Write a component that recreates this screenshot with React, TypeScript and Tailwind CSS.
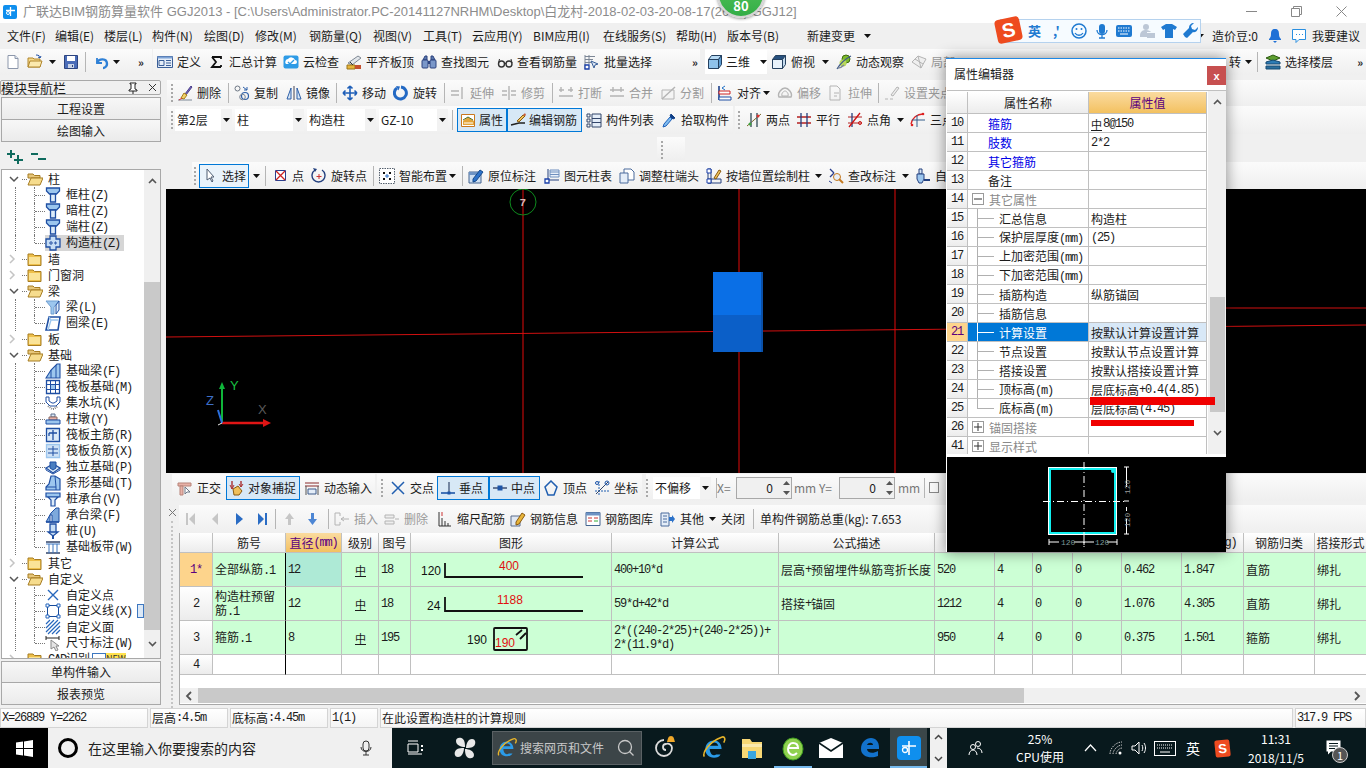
import React from "react";

type N = React.ReactNode;
const Svg = ({ w = 16, h = 16, v, children }: { w?: number; h?: number; v?: string; children: N }) => (
  <svg width={w} height={h} viewBox={v ?? `0 0 ${w} ${h}`} className="shrink-0 block" fill="none">{children}</svg>
);
const B = "#1f4fa3";
const L = "#9cc6ee";
const D = "#b4b4b4";

const I: Record<string, N> = {
  newDoc: <Svg><path d="M3 1.5h7l3 3v10H3z" fill="#fff" stroke="#8c97ab" /><path d="M10 1.5v3h3" fill="#dfe6f2" stroke="#8c97ab" /></Svg>,
  open: <Svg><path d="M1 4h5l1 1h6v8H1z" fill="#f6d98a" stroke="#b0862c" /><path d="M3 7h12l-2 6H1z" fill="#fbe9ad" stroke="#b0862c" /><path d="M9 1c3 0 4 1 4 3M13 4l-2-1M13 4l1-2" stroke={B} /></Svg>,
  save: <Svg><path d="M1.5 1.5h13v13h-13z" fill="#4a6cb8" stroke="#2c437f" /><path d="M4 2h8v5H4z" fill="#fff" /><path d="M5 10h6v4H5z" fill="#c7d2e6" /><path d="M9 11h1v2H9z" fill="#2c437f" /></Svg>,
  undo: <Svg><path d="M3 4v5h5" stroke="#2f80d6" strokeWidth="1.8" /><path d="M3 9c2-5 10-5 10 1 0 2-2 4-4 4" stroke="#2f80d6" strokeWidth="2.4" /></Svg>,
  define: <Svg><path d="M.5 2.5h15v11H.5z" fill="#e6eef8" stroke="#3a5f98" /><path d="M.5 2.5h15v2H.5z" fill="#7da3d6" /><path d="M2 6.5h5v5H2zM9 6.5h5M9 9h5M9 11.5h5" stroke="#3a5f98" /></Svg>,
  sigma: <Svg><path d="M3 3h9v2M12 13H3l4-5-4-5M12 11v2" stroke="#111" strokeWidth="1.8" /></Svg>,
  cloud: <Svg><rect x=".5" y="1.5" width="15" height="13" rx="2" fill="#2e9be6" /><path d="M3 10a3 3 0 0 1 2-5 4 4 0 0 1 7 1 2 2 0 0 1 0 4z" fill="#fff" /><path d="M5 8l2 2 4-4" stroke="#2e9be6" strokeWidth="1.4" /></Svg>,
  flush: <Svg><path d="M2 9l10-7 3 2L6 11z" fill="#e2e6ea" stroke="#7e8894" /><path d="M1 11h8v4H1z" fill="#e7b53a" stroke="#9a7418" /><path d="M9 11h6v4H9z" fill="#c4502e" /><path d="M4 8l3 3" stroke="#333" /></Svg>,
  binoc: <Svg><path d="M2 6l2-4h2v4zM10 6V2h2l2 4z" fill="#5a78ae" stroke="#2c437f" /><rect x="1" y="6" width="6" height="8" rx="1" fill="#7a97c9" stroke="#2c437f" /><rect x="9" y="6" width="6" height="8" rx="1" fill="#7a97c9" stroke="#2c437f" /><path d="M7 7h2v3H7z" fill="#2c437f" /></Svg>,
  glasses: <Svg><circle cx="4.5" cy="10" r="3" stroke="#333" strokeWidth="1.4" /><circle cx="12" cy="10" r="3" stroke="#333" strokeWidth="1.4" /><path d="M7.5 9.5h1.5M1.5 9l1-4M15 9l-1-4" stroke="#333" /></Svg>,
  batch: <Svg><path d="M1 2h10v1H1zM1 5h8v1H1zM1 8h6v1H1z" fill="#7d8796" /><path d="M1 1v14M5 1v9" stroke="#7d8796" /><path d="M7 7l7 3-3 1-1 3z" fill="#d9e4f2" stroke="#3a5f98" /><path d="M1 11h4v4H1z" fill="#fff" stroke="#1a3fa8" strokeWidth="1.3" /></Svg>,
  cube: <Svg><path d="M1.5 5.5h10v9h-10z" fill="#8fc2ea" stroke="#24405f" /><path d="M1.5 5.5l3-4h10l-3 4z" fill="#b7daf4" stroke="#24405f" /><path d="M11.5 5.5l3-4v9l-3 4z" fill="#5c9bd0" stroke="#24405f" /></Svg>,
  cubeTop: <Svg><path d="M1.5 5.5h10v9h-10z" fill="#e7f1fa" stroke="#24405f" /><path d="M1.5 5.5l3-4h10l-3 4z" fill="#27517f" stroke="#24405f" /><path d="M11.5 5.5l3-4v9l-3 4z" fill="#c5dbee" stroke="#24405f" /></Svg>,
  orbit: <Svg><circle cx="10" cy="5" r="4" fill="#7dbb2a" stroke="#3f6b0e" /><circle cx="7" cy="9" r="3.5" fill="#b9d95a" /><path d="M1 15c3-5 8-10 14-13" stroke="#3f5a8a" strokeWidth="1.2" /><path d="M2 14c2 0 4-1 6-3" stroke="#7d8796" strokeWidth="1.6" /></Svg>,
  local: <Svg><path d="M1 8l6-6 8 3-5 9z" fill="#efefef" stroke={D} /><path d="M4 5l8 5M7 2l3 12" stroke={D} /></Svg>,
  floor: <Svg><path d="M1 4l7-3 7 3-7 3z" fill="#5d9e2e" stroke="#2c5a12" /><path d="M1 8l7-2 7 2v2H1z" fill="#2c7bb5" stroke="#174a72" /><path d="M1 12h14v3H1z" fill="#2a6f9e" stroke="#174a72" /></Svg>,
  eraser: <Svg><path d="M8 9l6-8 1 1-6 8z" fill="#7a6bc2" stroke="#4b3f8a" /><path d="M4 13l3-5 3 2-3 4z" fill="#f2d16b" stroke="#a67f16" /><path d="M1 15h14" stroke="#7d8796" /><path d="M2 15l3-2" stroke="#d33" /></Svg>,
  copy: <Svg><rect x="1" y="1" width="5" height="5" rx="2.5" stroke="#6d7785" /><circle cx="11" cy="11" r="3.5" stroke="#2d5fa8" strokeWidth="1.2" /><circle cx="8.5" cy="12" r="2.8" stroke="#7d8796" /><path d="M9 2l4 3M13 5h-3M13 5V2" stroke="#2d5fa8" /></Svg>,
  mirror: <Svg><path d="M1 14l4-11v11zM15 14L11 3v11z" fill="#d7e6f5" stroke="#2d5fa8" /><path d="M8 1v14" stroke="#445" /></Svg>,
  move: <Svg><path d="M8 1v14M1 8h14M8 1L5.5 3.5M8 1l2.500 2.500M8 15l-2.500-2.500M8 15l2.500-2.500M1 8l2.500-2.500M1 8l2.500 2.500M15 8l-2.500-2.500M15 8l-2.500 2.500" stroke="#1f5fb8" strokeWidth="1.6" /></Svg>,
  rotate: <Svg><path d="M4 3a6 6 0 1 0 4-1" stroke="#2369c4" strokeWidth="3" /><path d="M3 1l4 .5-1.500 4z" fill="#2369c4" /></Svg>,
  extend: <Svg><path d="M1 6h8M1 10h8M12 2v12" stroke={D} strokeWidth="1.4" /></Svg>,
  trim: <Svg><path d="M1 6h5M10 6h5M1 10h5M10 10h5M8 1v14" stroke={D} strokeWidth="1.4" /></Svg>,
  cut: <Svg><path d="M1 5h5M10 5h5M1 11h14M3 2v5M13 2v5" stroke={D} strokeWidth="1.4" /></Svg>,
  merge: <Svg><path d="M1 5h14M1 11h14M4 2v5M12 2v5" stroke={D} strokeWidth="1.4" /></Svg>,
  split: <Svg><path d="M2 5h12v9H2z" fill="#f4f4f4" stroke={D} /><path d="M2 14L15 2" stroke={D} strokeWidth="1.4" /></Svg>,
  align: <Svg><path d="M2 1v14" stroke="#1c3f8a" strokeWidth="1.6" /><path d="M2 6h11v3H2z" fill="#fff" stroke="#c22" /><path d="M2 12h12v3H2z" fill="#fff" stroke={B} /><path d="M8 1L5 3l3 2" stroke="#1f6fc4" /></Svg>,
  offset: <Svg><path d="M2 12c-2-4 3-9 6-9s8 5 6 9z" stroke={D} strokeWidth="1.4" /><path d="M5 11c-1-3 2-5 3-5s4 2 3 5z" stroke={D} /></Svg>,
  stretch: <Svg><path d="M2 1h7l3 3v11H2z" stroke={D} /><path d="M6 8h5M6 11h3" stroke={D} /></Svg>,
  gripIc: <Svg><path d="M1 14h3M6 14h3" stroke={D} /><path d="M7 10l6-8 2 1-6 8z" fill="#ececec" stroke={D} /></Svg>,
  attr: <Svg><path d="M1.500 2.500h13v12h-13z" fill="#fff" stroke="#c9781f" /><path d="M3 9l5-4 6 4v4H3z" fill="#e3a53a" /><path d="M3 8l5-3 5 3" stroke="#4d6f2b" /><path d="M4 11h9" stroke="#fff" /></Svg>,
  rebar: <Svg><path d="M1 13l8-2h6" stroke="#222" strokeWidth="1.500" /><path d="M7 9l6-6 2 1-6 6z" fill="#f0c35a" stroke="#8a5a10" /><path d="M13 3l2-2 1 2-1 1z" fill="#c85a3a" /></Svg>,
  list: <Svg><path d="M1 2h3v3H1zM1 7h3v3H1zM1 12h3v3H1z" stroke="#33466b" /><path d="M6 2h9v13H6z" fill="#e4edf8" stroke="#33466b" /><path d="M6 6.500h9M6 10.500h9" stroke="#33466b" /></Svg>,
  pick: <Svg><path d="M10 2l4 4-2 1-3-3z" fill="#113f85" stroke="#113f85" /><path d="M9 5l2 2-6 7-3 1 1-3z" fill="#7fbdf0" stroke="#1f5fb8" /></Svg>,
  twoPt: <Svg><path d="M5 1v14M11 1v14M1 14L15 2" stroke="#7d6b2a" /><path d="M5 1v14M11 1v14" stroke="#335c8a" /><circle cx="4" cy="12" r="1.500" fill="#3fa23f" /><circle cx="12" cy="4" r="1.500" fill="#d33" /></Svg>,
  para: <Svg><path d="M1 5h14M1 11h14" stroke="#b52020" strokeWidth="1.300" /><path d="M5 1v14M11 1v14" stroke="#24407f" strokeWidth="1.300" /></Svg>,
  ang: <Svg><path d="M1 5h14M1 11h14" stroke="#b52020" /><path d="M5 1v14" stroke="#24407f" strokeWidth="1.300" /><path d="M2 15L13 1" stroke="#c11" strokeWidth="1.300" /><circle cx="13" cy="11" r="1.500" stroke="#c11" /></Svg>,
  threePt: <Svg><path d="M1 12C2 6 7 2 13 2" stroke="#d22" strokeWidth="1.300" /><path d="M7 3v12M2 8h13" stroke="#335c8a" /><circle cx="13" cy="2" r="1.300" fill="#d22" /><circle cx="2" cy="13" r="1.300" fill="#d22" /></Svg>,
  cursor: <Svg w={8} h={15}><path d="M1 1v11l3-2 2 4 1-1-2-4h3z" fill="#fff" stroke="#4f5d73" /></Svg>,
  pt: <Svg w={11} h={11}><path d="M.5.5h10v10H.5z" fill="#fff" stroke="#2a3f8f" /><path d="M1 1l9 9M10 1l-9 9" stroke="#c22" strokeWidth="1.300" /></Svg>,
  rotPt: <Svg><path d="M4 2a6.500 6.500 0 1 0 7 0" stroke="#24407f" strokeWidth="1.400" /><path d="M2 0l4 1-2 3z" fill="#24407f" /><path d="M8 6v5M5.500 8.500h5" stroke="#c33" /></Svg>,
  smart: <Svg><path d="M.5.500h15v15H.5z" fill="#fff" stroke="#55606e" strokeDasharray="1.500 1" /><path d="M4 4h2v2H4zM10 4h2v2h-2zM4 10h2v2H4zM10 10h2v2h-2z" fill="#111" /><path d="M8 6v4M6 8h4" stroke="#2d6fc4" /></Svg>,
  orig: <Svg><path d="M1 4h12v11H1z" fill="#cfe0f2" stroke="#43638f" /><path d="M1 4h12v3H1z" fill="#6d93c4" /><path d="M5 11l7-9 3 2-7 9-3 1z" fill="#2d72c9" stroke="#174a8a" /></Svg>,
  colT: <Svg><path d="M4 1v11h11" stroke="#24407f" /><path d="M6 2h9v7H6z" fill="#eaf1fa" stroke="#6f8fbe" /><path d="M6 4h9M6 6.500h9" stroke="#6f8fbe" /><path d="M1 11h4v4H1z" fill="#fff" stroke="#1a3fa8" strokeWidth="1.300" /></Svg>,
  adj: <Svg><path d="M5 1h7l3 3v8H5z" fill="#fff" stroke="#4b6a9c" /><path d="M1 5h8v10H1z" fill="#e4edf8" stroke="#4b6a9c" /></Svg>,
  wall: <Svg><path d="M2 1h3v14H2zM2 11h13v4H2z" stroke="#24407f" /><path d="M1 1h4v4H1zM1 11h4v4H1z" fill="#fff" stroke="#1a3fa8" /><path d="M8 10l5-8 2 1-5 8z" fill="#f0c35a" stroke="#8a5a10" /></Svg>,
  check: <Svg><path d="M2 1l4 4M2 9l4-4" stroke="#2a3f8f" strokeWidth="1.300" /><circle cx="9" cy="9" r="3.500" fill="#e8eef7" stroke="#c4791f" /><path d="M11 11l4 4" stroke="#c4791f" strokeWidth="2" /><path d="M1 13l3 2" stroke="#2a3f8f" /></Svg>,
  auto: <Svg><path d="M4 1h3v5H4z" fill="#d7e6f5" stroke="#24407f" /><path d="M2 6h7v5l-2 4H4l-2-4z" fill="#9cc6ee" stroke="#24407f" /><path d="M9 12h6" stroke="#24407f" strokeWidth="2" /></Svg>,
  ortho: <Svg><path d="M1 3h13v3H1z" fill="#e8b2a8" stroke="#b78378" /><path d="M3 6h3v9H3z" fill="#e8b2a8" stroke="#b78378" /><path d="M8 7v7l2-2 3 0z" fill="#fff" stroke="#6d7785" /></Svg>,
  snap: <Svg><path d="M3 1v8M12 1v6" stroke="#a33" strokeWidth="1.400" /><path d="M1 5l2 4 2-4M10 4l2 3 2-3" stroke="#a33" /><path d="M4 9l5-3 4 5-3 4H5z" fill="#f0c05a" stroke="#8a5a10" /></Svg>,
  dyn: <Svg><path d="M1 3h14M1 6h14" stroke="#8a2a2a" /><path d="M2 6v9M14 6v9" stroke="#555" /><path d="M4 9h8v5H4z" fill="#e4edf8" stroke="#3d5a8a" /></Svg>,
  cross: <Svg><path d="M2 2l12 12M14 2L2 14" stroke="#215fb0" strokeWidth="1.500" /></Svg>,
  perp: <Svg><path d="M1 13h14" stroke="#1d55a8" strokeWidth="1.600" /><path d="M9 2v11" stroke="#33466b" strokeWidth="1.200" /><rect x="7.500" y="11.500" width="3" height="3" fill="#1d55a8" /></Svg>,
  mid: <Svg><path d="M1 8h14" stroke="#33466b" strokeWidth="1.400" /><rect x="5.500" y="5.500" width="5" height="5" fill="#1d55a8" /></Svg>,
  vert: <Svg><path d="M8 1l6 6-3 8H5L2 7z" stroke="#215fb0" strokeWidth="1.500" /></Svg>,
  coord: <Svg><path d="M5 1v14M1 11h14" stroke="#215fb0" strokeDasharray="2 1" /><path d="M2 14L14 2" stroke="#33466b" /><circle cx="13" cy="3" r="2" stroke="#1d55a8" /><circle cx="3" cy="3" r="1.500" stroke="#1d55a8" /></Svg>,
  ins: <Svg><path d="M1 2h5M1 14h5M1 2v12M6 2v3M6 11v3" stroke={D} /><path d="M7 8h8M10 6l-3 2 3 2" stroke={D} /></Svg>,
  del: <Svg><path d="M1 4h9v3H1zM1 10h9v3H1z" fill="#eee" stroke={D} /><path d="M11 8h4" stroke={D} /></Svg>,
  scale: <Svg><path d="M2 1v14h12" stroke="#333" /><path d="M5 7v8M8 10v5M11 12v3" stroke="#333" /><path d="M4 2h2M4 4h2" stroke="#c33" /></Svg>,
  info: <Svg><path d="M1 5h9v10H1z" fill="#dfe7f2" stroke="#5a6d8c" /><path d="M6 11l6-9 3 2-6 9-3 1z" fill="#e8b53a" stroke="#8a5a10" /></Svg>,
  lib: <Svg><path d="M1 1.500h14v13H1z" fill="#fff" stroke="#43638f" /><path d="M1 1.500h14v3H1z" fill="#6d93c4" /><path d="M3 7h4M3 10h4M9 7h4" stroke="#c33" /><path d="M9 10h4" stroke="#3a3" /></Svg>,
  other: <Svg><path d="M1 2h8v13H1z" fill="#e4edf8" stroke="#4b6a9c" /><path d="M3 5h4M3 8h4M3 11h4" stroke="#4b6a9c" /><path d="M9 6h3V4l3 4-3 4v-2H9z" fill="#2d72c9" /></Svg>,
  pin: <Svg w={10} h={12}><path d="M2 1h6v1H7v5l2 1v1H1V8l2-1V2H2zM5 9v3" stroke="#222" fill="#fff" /></Svg>,
};

// Tree icons
const cT = <Svg><path d="M1.500 1h13v3l-3 3h-7l-3-3z" fill={L} stroke={B} strokeWidth="1.300" /><path d="M5.500 7h5v8h-5z" fill="#dcebf9" stroke={B} strokeWidth="1.300" /></Svg>;
const TI: Record<string, N> = {
  col: cT,
  gz: <Svg><path d="M5 1h6v3h4v8h-4v3H5v-3H1V4h4z" fill="#c7def5" stroke={B} strokeWidth="1.300" /><path d="M5 7h2v2H5zM10 7h1v2h-1z" fill="#fff" stroke={B} /></Svg>,
  beam: <Svg><path d="M1 2h13L9 8v7H6V8z" fill={L} stroke="#6f9ed0" /><path d="M14 2v9l-3 4V6z" fill="#dcebf9" stroke={B} /></Svg>,
  ring: <Svg><path d="M4 2h11l-2 13H1z" fill="#fff" stroke={B} strokeWidth="1.600" /><path d="M4 2l2 3h7M6 5l-3 10" stroke={L} strokeWidth="1.300" /></Svg>,
  fb: <Svg><path d="M1 15l5-8 6-6h3v14z" fill={L} stroke={B} strokeWidth="1.100" /><path d="M6 7v8M11 2v13" stroke={B} /></Svg>,
  raft: <Svg><path d="M1.500 1.500h13v13h-13z" fill="#fff" stroke={B} strokeWidth="1.300" /><path d="M1.500 5.500h13M1.500 10.500h13M5.500 1.500v13M10.500 1.500v13" stroke={B} /><path d="M6 6h4v4H6z" fill={L} /></Svg>,
  sump: <Svg><path d="M1 2h3v4l3 2h2l3-2V2h3v5l-4 4H5L1 7z" fill="#fff" stroke={B} /><path d="M3 11l4 3h2l4-3" stroke="#888" strokeDasharray="1 1" strokeWidth="2" /></Svg>,
  pier: <Svg><path d="M6 3h4v3H6z" fill="#dcebf9" stroke="#5a6d8c" /><path d="M4 6h8v3H4z" fill="#e8b2a8" stroke="#8a6a64" /><path d="M1 9h14v4H1z" fill={L} stroke={B} /></Svg>,
  rm: <Svg><path d="M1.500 1.500h13v13h-13z" fill="#dcebf9" stroke={B} strokeWidth="1.300" /><path d="M8 3v10M4 6h8M4 6v3" stroke={B} strokeWidth="1.300" /></Svg>,
  rn: <Svg><path d="M1.500 1.500h13v13h-13z" fill="#cfe2f5" stroke={L} strokeWidth="1.300" /><path d="M3 6h10M3 10h10M8 3v10" stroke={B} /></Svg>,
  iso: <Svg><path d="M1 9l7-4 7 4-7 5z" fill="#dcebf9" stroke={B} strokeWidth="1.300" /><path d="M5 3h6v6l-3 2-3-2z" fill="#4a7ec0" stroke={B} /><path d="M1 9v2l7 4 7-4V9" stroke={B} /></Svg>,
  strip: <Svg><path d="M1 15v-3l3-3 2-8h4l5 3v11z" fill={L} stroke={B} strokeWidth="1.200" /><path d="M1 12h10v3M10 1l1 11" stroke={B} /></Svg>,
  cap: <Svg><path d="M1 2h14v4H1z" fill={L} stroke={B} strokeWidth="1.200" /><path d="M3 6h10l-3 3v6H6V9z" fill="#dcebf9" stroke={B} strokeWidth="1.200" /></Svg>,
  capb: <Svg><path d="M1 15l5-9 5-5h3v14z" fill="#7ea9dc" stroke={B} /><path d="M5 8h2v7H5z" fill="#fff" stroke={B} /><path d="M1 15h13" stroke={B} strokeWidth="1.500" /></Svg>,
  pile: <Svg><path d="M5 1h6v8H5zM3 9h10l-5 4z" fill="#c7def5" stroke={B} strokeWidth="1.300" /><path d="M8 13v3" stroke={B} strokeWidth="2" /></Svg>,
  band: <Svg><path d="M1 3h14M1 14h14" stroke="#33466b" strokeWidth="1.300" /><path d="M1 5h14M4 5v9M8 5v9M12 5v9" stroke="#3d77c0" /></Svg>,
  cpt: <Svg><path d="M3 3l10 10M13 3L3 13" stroke="#2767bd" strokeWidth="1.400" /></Svg>,
  cline: <Svg><path d="M2.500 2.500h11v11h-11z" stroke="#184c9c" /><path d="M1 1h3v3H1zM12 1h3v3h-3zM1 12h3v3H1zM12 12h3v3h-3z" fill="#fff" stroke="#2767bd" /></Svg>,
  cface: <Svg><path d="M1 5l4-4M1 9l8-8M1 13L13 1M3 15L15 3M7 15l8-8M11 15l4-4" stroke="#2767bd" strokeWidth="1.200" /></Svg>,
  cdim: <Svg><path d="M1 3h13M1 1v4M14 1v4" stroke="#222" /><path d="M6 5v9l3-2 2 4 2-1-2-4h3z" fill="#e4e4e4" stroke="#888" /></Svg>,
};
const Fo = <Svg><path d="M1 3h5l1.500 1.500H14v10H1z" fill="#eec04b" stroke="#a67c22" /><path d="M2 6h11v7H2z" fill="#fae397" /></Svg>;
const FoOpen = <Svg><path d="M1 3h5l1.500 1.500H13V7H1z" fill="#e7c77a" stroke="#a67c22" /><path d="M4 7h12l-3 7H1z" fill="#f6dc8d" stroke="#a67c22" /></Svg>;

const mono = "font-['Liberation_Mono',monospace] text-[12px] tracking-[-1.2px]";
const T = ({ s }: { s: string }) => (
  <>{s.split(/([\x00-\x7f]+)/).map((p, i) => (i % 2 ? <span key={i} className={mono}>{p}</span> : p))}</>
);
const Rebar = () => <span className="text-[11px] mr-[1px] underline underline-offset-[1px] decoration-1">中</span>;

const Caret = ({ c = "w-[8px]" }: { c?: string }) => (
  <span className={`flex items-center justify-center shrink-0 ${c}`}><Svg w={7} h={4}><path d="M0 0h7L3.500 4z" fill="#111" /></Svg></span>
);
const Sep = ({ c = "mr-[5px]" }: { c?: string }) => <span className={`w-px h-[20px] bg-[#b5b5b5] shrink-0 ${c}`} />;
const Grip = ({ c = "w-[6px]" }: { c?: string }) => (
  <span className={`flex flex-col gap-[2px] shrink-0 ${c}`}>
    {[0, 1, 2, 3, 4].map((i) => <span key={i} className="w-[2px] h-[2px] bg-[#a8a8a8]" />)}
  </span>
);
const Tool = ({ i, t, c = "pr-[7px]", dim }: { i: string; t: string; c?: string; dim?: boolean }) => (
  <div className={`flex items-center gap-[4px] shrink-0 whitespace-nowrap ${c} ${dim ? "text-[#9a9a9a]" : ""}`}>
    <span className="w-[16px] flex justify-center shrink-0">{I[i]}</span><span>{t}</span>
  </div>
);
const Act = ({ i, t, c }: { i: string; t: string; c: string }) => (
  <div className={`h-[24px] border border-[#0078d7] bg-[#d7e8f6] flex items-center gap-[3px] pl-[2px] shrink-0 whitespace-nowrap ${c}`}>
    <span className="w-[16px] flex justify-center shrink-0">{I[i]}</span><span>{t}</span>
  </div>
);
const More = () => <span className="text-[11px] font-bold leading-none text-[#222] tracking-[-1px]">»</span>;
const Sel = ({ t, c = "w-[69px] mr-[3px]" }: { t: string; c?: string }) => (
  <div className={`h-[22px] flex shrink-0 bg-white ${c}`}>
    <span className="flex-1 pl-[2px] flex items-center whitespace-nowrap">{t}</span>
    <span className="w-[11px] bg-[#f2f2f2] flex items-center justify-center"><Svg w={7} h={4}><path d="M0 0h7L3.500 4z" fill="#111" /></Svg></span>
  </div>
);
const grad = "bg-gradient-to-b from-[#fbfbfb] to-[#efefef]";

const menus: [string, string][] = [
  ["文件(F)", "w-[48px]"], ["编辑(E)", "w-[49px]"], ["楼层(L)", "w-[48px]"], ["构件(N)", "w-[52px]"], ["绘图(D)", "w-[51px]"],
  ["修改(M)", "w-[54px]"], ["钢筋量(Q)", "w-[64px]"], ["视图(V)", "w-[50px]"], ["工具(T)", "w-[49px]"], ["云应用(Y)", "w-[61px]"],
  ["BIM应用(I)", "w-[70px]"], ["在线服务(S)", "w-[73px]"], ["帮助(H)", "w-[51px]"], ["版本号(B)", "w-[80px]"],
];

function TitleBar() {
  return (
    <div className="h-[23px] bg-white flex items-center shrink-0 relative">
      <div className="ml-[3px] w-[14px] h-[14px] rounded-[2px] bg-[#0f8fee] flex items-center justify-center shrink-0">
        <Svg w={11} h={11}><path d="M5.500 1v9M1 4.500h9" stroke="#fff" strokeWidth="1.300" /><circle cx="3" cy="7" r="1.500" stroke="#fff" /></Svg>
      </div>
      <span className="ml-[6px] text-[13px] leading-[20px] text-[#8c8c8c] whitespace-nowrap font-['Liberation_Sans','Noto_Sans_CJK_SC',sans-serif]">广联达BIM钢筋算量软件 GGJ2013 - [C:\Users\Administrator.PC-20141127NRHM\Desktop\白龙村-2018-02-03-20-08-17(2603).GGJ12]</span>
      <div className="ml-auto flex items-center pr-[19px] gap-[34px]">
        <Svg w={11} h={11}><path d="M0 5.500h11" stroke="#888" /></Svg>
        <Svg w={11} h={11}><path d="M.5 2.500h8v8h-8zM2.500 2.500v-2h8v8h-2" stroke="#888" /></Svg>
        <Svg w={11} h={11}><path d="M.5.500l10 10M10.500.500l-10 10" stroke="#888" /></Svg>
      </div>
    </div>
  );
}
function MenuBar() {
  return (
    <div className="h-[26px] flex items-center pl-[7px] shrink-0 whitespace-nowrap">
      {menus.map(([t, c]) => <span key={t} className={`shrink-0 ${c}`}>{t}</span>)}
      <span className="w-[56px] shrink-0">新建变更</span>
      <Caret />
      <div className="ml-auto flex items-center pr-[6px]">
        <Caret c="w-[10px] mr-[6px]" />
        <span className="w-[56px]">造价豆:0</span>
        <Svg w={14} h={16}><path d="M7 1c3 0 4 2 4 5 0 3 1 4 2 5v1H1v-1c1-1 2-2 2-5 0-3 1-5 4-5zM5 13h4l-2 2z" fill="#1f70d6" /></Svg>
        <span className="ml-[9px] mr-[5px]"><Svg><path d="M1.500 1.500h13v10H8l-3 3v-3H1.500z" fill="#fff" stroke="#2a8fe0" /><path d="M5 6.500h1M8 6.500h1M11 6.500h1" stroke="#2a8fe0" /></Svg></span>
        <span>我要建议</span>
      </div>
    </div>
  );
}
function Toolbar1() {
  return (
    <div className="h-[26px] flex shrink-0 items-center gap-[1px]">
      <div className={`${grad} h-full w-[152px] flex items-center pl-[5px] relative`}>
        <span className="w-[20px]">{I.newDoc}</span>
        <span className="w-[20px] ml-[2px]">{I.open}</span>
        <Caret c="w-[10px] mr-[6px]" />
        {I.save}
        <Sep c="ml-[6px] mr-[8px]" />
        {I.undo}
        <Caret c="w-[12px] mr-[16px]" />
        <More />
      </div>
      <div className={`${grad} h-full w-[547px] flex items-center pl-[4px]`}>
        <Tool i="define" t="定义" c="w-[52px]" />
        <Tool i="sigma" t="汇总计算" c="w-[74px]" />
        <Tool i="cloud" t="云检查" c="w-[63px]" />
        <Tool i="flush" t="平齐板顶" c="w-[75px]" />
        <Tool i="binoc" t="查找图元" c="w-[76px]" />
        <Tool i="glasses" t="查看钢筋量" c="w-[87px]" />
        <Tool i="batch" t="批量选择" c="w-[108px]" />
        <More />
      </div>
      <div className={`${grad} h-full flex-1 flex items-center ml-[4px] pr-[2px]`}>
        <div className="w-[62px] h-[24px] bg-white flex items-center pl-[2px] mr-[4px] shrink-0">
          <span className="w-[16px]">{I.cube}</span><span className="ml-[3px] w-[34px]">三维</span><Caret />
        </div>
        <Tool i="cubeTop" t="俯视" c="pr-[6px]" /><Caret c="w-[8px] mr-[7px]" />
        <Tool i="orbit" t="动态观察" c="w-[75px]" />
        <Tool i="local" t="局部" c="w-[318px]" dim />
        <span className="mr-[3px]">转</span><Caret c="w-[8px] mr-[5px]" />
        <Sep c="mr-[7px]" />
        <Tool i="floor" t="选择楼层" c="" />
        <span className="ml-auto mr-[2px]"><More /></span>
      </div>
    </div>
  );
}
function Row2() {
  return (
    <div className={`${grad} h-[26px] ml-px flex items-center pl-[4px] whitespace-nowrap`}>
      <Grip />
      <Tool i="eraser" t="删除" c="w-[51px]" /><Sep />
      <Tool i="copy" t="复制" c="w-[52px]" />
      <Tool i="mirror" t="镜像" c="w-[50px]" /><Sep />
      <Tool i="move" t="移动" c="w-[51px]" />
      <Tool i="rotate" t="旋转" c="w-[51px]" /><Sep />
      <Tool i="extend" t="延伸" c="w-[51px]" dim />
      <Tool i="trim" t="修剪" c="w-[51px]" dim /><Sep />
      <Tool i="cut" t="打断" c="w-[51px]" dim />
      <Tool i="merge" t="合并" c="w-[51px]" dim />
      <Tool i="split" t="分割" c="w-[51px]" dim /><Sep />
      <Tool i="align" t="对齐" c="w-[45px]" /><Caret c="w-[8px] mr-[7px]" />
      <Tool i="offset" t="偏移" c="w-[51px]" dim />
      <Tool i="stretch" t="拉伸" c="w-[50px]" dim /><Sep />
      <Tool i="gripIc" t="设置夹点" c="" dim />
    </div>
  );
}
function Row3() {
  return (
    <div className={`${grad} h-[28px] ml-px flex items-center pl-[4px] whitespace-nowrap`}>
      <Grip c="w-[4px]" />
      <Sel t="第2层" c="w-[57px] mr-[3px]" />
      <Sel t="柱" />
      <Sel t="构造柱" />
      <Sel t="GZ-10" />
      <Sep c="ml-px mr-[4px]" />
      <Act i="attr" t="属性" c="w-[50px]" />
      <Act i="rebar" t="编辑钢筋" c="w-[75px]" />
      <Tool i="list" t="构件列表" c="w-[75px] ml-[4px]" />
      <Tool i="pick" t="拾取构件" c="w-[72px]" />
      <span className="w-[2px] self-stretch bg-[#f0f0f0] shrink-0" />
      <span className="w-[11px] shrink-0 pl-[3px]"><Grip c="w-[2px]" /></span>
      <Tool i="twoPt" t="两点" c="w-[50px]" />
      <Tool i="para" t="平行" c="w-[51px]" />
      <Tool i="ang" t="点角" c="w-[48px]" />
      <Caret c="w-[10px] mr-[5px]" />
      <Tool i="threePt" t="三点" c="" />
    </div>
  );
}
function Row4() {
  return (
    <div className={`${grad} h-[27px] ml-[26px] flex items-center pl-[2px] whitespace-nowrap`}>
      <Grip c="w-[5px]" />
      <div className="h-[24px] w-[50px] border border-[#0078d7] bg-[#eaf3fb] flex items-center pl-[6px] shrink-0">{I.cursor}<span className="ml-[8px]">选择</span></div>
      <Caret c="w-[14px]" /><Sep c="ml-[2px] mr-[6px]" />
      <Tool i="pt" t="点" c="w-[39px]" />
      <Tool i="rotPt" t="旋转点" c="w-[62px]" /><Sep />
      <Tool i="smart" t="智能布置" c="w-[70px]" /><Caret c="w-[7px]" /><Sep c="ml-[6px] mr-[5px]" />
      <Tool i="orig" t="原位标注" c="w-[76px]" />
      <Tool i="colT" t="图元柱表" c="w-[75px]" />
      <Tool i="adj" t="调整柱端头" c="w-[87px]" />
      <Tool i="wall" t="按墙位置绘制柱" c="w-[108px]" /><Caret c="w-[8px] mr-[6px]" />
      <Tool i="check" t="查改标注" c="w-[73px]" /><Caret c="w-[8px] mr-[6px]" />
      <Tool i="auto" t="自动标注" c="" />
    </div>
  );
}
function Canvas() {
  return (
    <div className="h-[284px] bg-black overflow-hidden shrink-0">
      <svg width="1200" height="284" viewBox="0 0 1200 284" className="block" fill="none">
        <path d="M0 148L1200 136M780 119H1200" stroke="#d01010" strokeWidth="1" />
        <path d="M357 0V284M573 0V284M729 0V284" stroke="#e00a0a" strokeWidth="1" />
        <circle cx="357" cy="13" r="13" stroke="#0e8a1e" strokeWidth="1" />
        <text x="353.500" y="17" fill="#d9b9b9" fontSize="11" fontFamily="Liberation Mono" fontWeight="700">7</text>
        <path d="M547 83h48v43h-48z" fill="#0a6fe6" />
        <path d="M547 126h48v37h-48z" fill="#0b5fc8" />
        <path d="M595 83h2v80h-2z" fill="#0a50a8" />
        <path d="M56 234V196" stroke="#0fb53a" strokeWidth="2" /><path d="M56 193l-3 7h6z" fill="#0fb53a" />
        <path d="M56 234H100" stroke="#e01515" strokeWidth="2.500" /><path d="M105 234l-8-4v8z" fill="#e01515" />
        <path d="M56 234l-4-13" stroke="#2a6fe0" strokeWidth="2" />
        <path d="M56 234l-4 2" stroke="#e8e8e8" />
        <text x="64" y="201" fill="#18c040" fontSize="13" fontFamily="Liberation Sans">Y</text>
        <text x="40" y="216" fill="#3d6fc8" fontSize="13" fontFamily="Liberation Sans">Z</text>
        <text x="92" y="225" fill="#5a5a5a" fontSize="13" fontFamily="Liberation Sans">X</text>
      </svg>
    </div>
  );
}
function SnapBar() {
  const num = "w-[56px] h-[22px] border border-[#a8a8a8] bg-[#f0f0f0] flex items-center justify-end shrink-0";
  const spin = (
    <span className="w-[10px] ml-[8px] flex flex-col items-center gap-[6px]">
      <Svg w={7} h={4}><path d="M0 4h7L3.500 0z" fill="#555" /></Svg>
      <Svg w={7} h={4}><path d="M0 0h7L3.500 4z" fill="#555" /></Svg>
    </span>
  );
  return (
    <div className={`${grad} h-[27px] mt-px ml-[6px] mb-[4px] flex items-center pl-[5px] whitespace-nowrap shrink-0`}>
      <Tool i="ortho" t="正交" c="w-[49px]" />
      <Act i="snap" t="对象捕捉" c="w-[74px]" />
      <Tool i="dyn" t="动态输入" c="w-[71px] ml-[4px]" />
      <span className="w-[2px] self-stretch bg-[#f0f0f0] shrink-0" />
      <span className="w-[13px] pl-[4px] shrink-0"><Grip c="w-[2px]" /></span>
      <Tool i="cross" t="交点" c="w-[47px]" />
      <Act i="perp" t="垂点" c="w-[52px]" />
      <Act i="mid" t="中点" c="w-[51px]" />
      <Tool i="vert" t="顶点" c="w-[51px] ml-[3px]" />
      <Tool i="coord" t="坐标" c="w-[48px]" />
      <span className="w-[4px] self-stretch bg-[#f0f0f0] shrink-0" />
      <Grip c="w-[7px]" />
      <Sel t="不偏移" c="w-[58px]" />
      <Sep c="ml-[5px]" />
      <span className="w-[19px] text-[#777] shrink-0">X=</span>
      <div className={num}><span>0</span>{spin}</div>
      <span className="w-[27px] pl-[2px] text-[#777] shrink-0">mm</span>
      <span className="w-[20px] text-[#777] shrink-0">Y=</span>
      <div className={num}><span>0</span>{spin}</div>
      <span className="w-[29px] pl-[3px] text-[#777] shrink-0">mm</span>
      <Sep c="mr-[4px]" />
      <span className="w-[10px] h-[11px] border border-[#888] bg-[#f8f8f8] shrink-0" />
    </div>
  );
}
function RebarBar() {
  const nav = (d: string, fill: string, c: string) => (
    <span className={`shrink-0 ${c}`}><Svg w={11} h={14}><path d={d} fill={fill} /></Svg></span>
  );
  return (
    <div className={`${grad} h-[28px] flex items-center pl-[6px] whitespace-nowrap shrink-0`}>
      {nav("M1 1h2v12H1zM10 1v12L4 7z", "#c6c6c6", "w-[25px]")}
      {nav("M8 1v12L2 7z", "#c6c6c6", "w-[24px]")}
      {nav("M2 1v12l7-6z", "#2a6cc4", "w-[23px]")}
      {nav("M1 1v12l6-6zM8 1h2v12H8z", "#2a6cc4", "w-[18px]")}
      <Sep c="mr-[8px]" />
      {nav("M5.500 1L1 7h3v6h3V7h3z", "#c6c6c6", "w-[23px]")}
      {nav("M4 1v6H1l4.500 6L10 7H7V1z", "#4d86d4", "w-[21px]")}
      <Sep />
      <Tool i="ins" t="插入" c="w-[50px]" dim />
      <Tool i="del" t="删除" c="w-[53px]" dim />
      <Tool i="scale" t="缩尺配筋" c="w-[73px]" />
      <Tool i="info" t="钢筋信息" c="w-[75px]" />
      <Tool i="lib" t="钢筋图库" c="w-[75px]" />
      <Tool i="other" t="其他" c="w-[48px]" />
      <Caret c="w-[8px] mr-[5px]" />
      <span className="w-[32px] shrink-0">关闭</span>
      <Sep c="mr-[6px]" />
      <span>单构件钢筋总重(kg): 7.653</span>
    </div>
  );
}

const cols = "grid grid-cols-[33px_73px_56px_37px_32px_201px_167px_156px_60px_38px_40px_49px_60px_62px_71px_52px]";
const rowH = "border-r border-b border-[#c0c0c0]";
const Fig = ({ n }: { n: 1 | 2 | 3 }) => (
  <svg width="200" height="33" viewBox="0 0 200 33" className="block" fill="none">
    {n === 1 && <>
      <path d="M34 10v14h138" stroke="#111" strokeWidth="1.800" />
      <text x="10" y="22" fontSize="12" fill="#111" fontFamily="Liberation Sans">120</text>
      <text x="88" y="17" fontSize="12" fill="#e01010" fontFamily="Liberation Sans">400</text>
    </>}
    {n === 2 && <>
      <path d="M34 10v14h138" stroke="#111" strokeWidth="1.800" />
      <text x="16" y="23" fontSize="12" fill="#111" fontFamily="Liberation Sans">24</text>
      <text x="86" y="17" fontSize="12" fill="#e01010" fontFamily="Liberation Sans">1188</text>
    </>}
    {n === 3 && <>
      <rect x="83" y="7" width="33" height="22" rx="1" stroke="#111" strokeWidth="1.800" />
      <path d="M105 14l6-5M109 18l6-6" stroke="#111" strokeWidth="1.800" />
      <text x="56" y="23" fontSize="12" fill="#111" fontFamily="Liberation Sans">190</text>
      <text x="84" y="26" fontSize="12" fill="#e01010" fontFamily="Liberation Sans">190</text>
    </>}
  </svg>
);
const heads = ["", "筋号", "直径(mm)", "级别", "图号", "图形", "计算公式", "公式描述", "长度", "根数", "搭接", "损耗(%)", "单重(kg)", "总重(kg)", "钢筋归类", "搭接形式"];
const data: { id: string; no: N; dia: string; grade: boolean; fig?: 1 | 2 | 3; code: string; f: N; desc: string; rest: string[] }[] = [
  { id: "1*", no: <T s="全部纵筋.1" />, dia: "12", grade: true, fig: 1, code: "18", f: "400+10*d", desc: "层高+预留埋件纵筋弯折长度", rest: ["520", "4", "0", "0", "0.462", "1.847", "直筋", "绑扎"] },
  { id: "2", no: <T s="构造柱预留筋.1" />, dia: "12", grade: true, fig: 2, code: "18", f: "59*d+42*d", desc: "搭接+锚固", rest: ["1212", "4", "0", "0", "1.076", "4.305", "直筋", "绑扎"] },
  { id: "3", no: <T s="箍筋.1" />, dia: "8", grade: true, fig: 3, code: "195", f: <>2*((240-2*25)+(240-2*25))+<br />2*(11.9*d)</>, desc: "", rest: ["950", "4", "0", "0", "0.375", "1.501", "箍筋", "绑扎"] },
];
function RebarTable() {
  const hd = "h-[20px] bg-gradient-to-b from-[#ffffff] to-[#ececec] border-r border-b border-[#c0c0c0] flex items-center justify-center whitespace-nowrap overflow-hidden";
  const cell = `${rowH} flex items-center pl-[2px] overflow-hidden`;
  return (
    <div className="shrink-0">
      <div className={cols}>
        {heads.map((h, i) => (
          <div key={i} className={i === 2 ? "h-[20px] bg-gradient-to-b from-[#fadb9f] to-[#f3c15f] border-r border-b border-[#c0c0c0] flex items-center justify-center text-[#5a007f] whitespace-nowrap" : hd}><T s={h} /></div>
        ))}
      </div>
      {data.map((r, ri) => (
        <div key={r.id} className={`${cols} h-[34px]`}>
          <div className={`${rowH} flex items-center justify-center ${ri === 0 ? "bg-[#fdd48c] text-[#5a007f]" : "bg-gradient-to-b from-[#ffffff] to-[#ececec]"}`}><span className={mono}>{r.id}</span></div>
          <div className={`border-r border-r-black border-b border-b-[#c0c0c0] bg-[#ccffd5] flex items-center pl-[2px] leading-[14px]`}><span>{r.no}</span></div>
          <div className={`${cell} ${ri === 0 ? "bg-[#aeead6]" : "bg-[#ccffd5]"}`}><span className={mono}>{r.dia}</span></div>
          <div className={`${cell} bg-[#ccffd5] justify-center`}><Rebar /></div>
          <div className={`${cell} bg-[#ccffd5]`}><span className={mono}>{r.code}</span></div>
          <div className={`${rowH} bg-[#ccffd5] overflow-hidden`}><Fig n={r.fig!} /></div>
          <div className={`${cell} bg-[#ccffd5] leading-[14px]`}><span className={`${mono} whitespace-nowrap`}>{r.f}</span></div>
          <div className={`${cell} bg-[#ccffd5] whitespace-nowrap`}><T s={r.desc} /></div>
          {r.rest.map((v, i) => (
            <div key={i} className={`${cell} bg-[#ccffd5] whitespace-nowrap`}><T s={v} /></div>
          ))}
        </div>
      ))}
      <div className={`${cols} h-[20px]`}>
        <div className={`${rowH} flex items-center justify-center bg-gradient-to-b from-[#ffffff] to-[#ececec]`}><span className={mono}>4</span></div>
        <div className="border-r border-r-black border-b border-b-[#c0c0c0]" />
        {Array.from({ length: 14 }).map((_, i) => <div key={i} className={rowH} />)}
      </div>
    </div>
  );
}
function Bottom() {
  return (
    <div className="flex-1 flex min-h-0">
      <div className="w-[13px] shrink-0 flex flex-col items-center pt-[3px]">
        <Svg w={9} h={9}><path d="M1 1l7 7M8 1L1 8" stroke="#777" /></Svg>
        <div className="mt-[4px] flex-1 w-[3px] border-l-2 border-dotted border-[#c4c4c4]" />
      </div>
      <div className="flex-1 min-w-0 flex flex-col">
        <RebarBar />
        <div className="bg-white flex-1 flex flex-col border-b border-l border-[#a8a8a8] mb-[3px] overflow-hidden">
          <RebarTable />
          <div className="flex-1" />
          <div className="h-[15px] mb-[1px] flex bg-[#f0f0f0] shrink-0">
            <span className="w-[18px] flex items-center justify-center"><Svg w={8} h={10}><path d="M6 1L2 5l4 4" stroke="#555" strokeWidth="1.800" /></Svg></span>
            <span className="w-[826px] bg-[#c9c9c9]" />
            <span className="ml-auto w-[18px] flex items-center justify-center"><Svg w={8} h={10}><path d="M2 1l4 4-4 4" stroke="#555" strokeWidth="1.800" /></Svg></span>
          </div>
        </div>
      </div>
    </div>
  );
}

type Tr = [string, N, "c" | "f", string?, ("t" | "l")?];
const treeRows: Tr[] = [
  ["o", "柱", "f"], ["c", "框柱(Z)", "c", "col"], ["c", "暗柱(Z)", "c", "col"], ["c", "端柱(Z)", "c", "col"], ["c", "构造柱(Z)", "c", "gz", "l"],
  ["x", "墙", "f"], ["x", "门窗洞", "f"],
  ["o", "梁", "f"], ["c", "梁(L)", "c", "beam"], ["c", "圈梁(E)", "c", "ring", "l"],
  ["x", "板", "f"],
  ["o", "基础", "f"], ["c", "基础梁(F)", "c", "fb"], ["c", "筏板基础(M)", "c", "raft"], ["c", "集水坑(K)", "c", "sump"], ["c", "柱墩(Y)", "c", "pier"],
  ["c", "筏板主筋(R)", "c", "rm"], ["c", "筏板负筋(X)", "c", "rn"], ["c", "独立基础(P)", "c", "iso"], ["c", "条形基础(T)", "c", "strip"],
  ["c", "桩承台(V)", "c", "cap"], ["c", "承台梁(F)", "c", "capb"], ["c", "桩(U)", "c", "pile"], ["c", "基础板带(W)", "c", "band", "l"],
  ["x", "其它", "f"],
  ["o", "自定义", "f"], ["c", "自定义点", "c", "cpt"], ["c", "自定义线(X)", "c", "cline"], ["c", "自定义面", "c", "cface"], ["c", "尺寸标注(W)", "c", "cdim", "l"],
  ["x", "CAD识别", "f"],
];
function Nav() {
  return (
    <div className="w-[162px] shrink-0 flex flex-col pl-[1px] pr-[1px]">
      <div className="h-[5px]" />
      <div className="h-[15px] -ml-[1px] border border-[#a8a8a8] rounded-[2px] flex items-center text-[13px] leading-[13px] bg-[#f0f0f0]">
        <span>模块导航栏</span>
        <span className="ml-auto mr-[10px]">{I.pin}</span>
        <span className="mr-[3px]"><Svg w={9} h={9}><path d="M1 1l7 7M8 1L1 8" stroke="#333" /></Svg></span>
      </div>
      <div className="h-[23px] mt-[2px] border border-[#a8a8a8] bg-gradient-to-b from-[#f7f7f7] to-[#ebebeb] flex items-center justify-center">工程设置</div>
      <div className="h-[22px] border-x border-b border-[#a8a8a8] bg-gradient-to-b from-[#f7f7f7] to-[#ebebeb] flex items-center justify-center">绘图输入</div>
      <div className="h-[27px] flex items-center pl-[6px] gap-[7px] pt-[3px] shrink-0">
        <Svg><path d="M4 1v8M0 5h8M11 6v9M7 11h9" stroke="#0f6b5e" strokeWidth="2" /></Svg>
        <Svg><path d="M1 5h7M8 10h8" stroke="#0f6b5e" strokeWidth="2" /></Svg>
      </div>
      <div className="h-[490px] border border-[#a8a8a8] bg-white flex overflow-hidden relative">
        <div className="flex-1 min-w-0 overflow-hidden pt-[1px]">
          {treeRows.map(([k, t, kind, ic, last]) => kind === "f" ? (
            <div key={String(t)} className="h-[16px] flex items-center whitespace-nowrap">
              <span className="w-[20px] pl-[7px] shrink-0">
                {k === "o" ? <Svg w={10} h={7}><path d="M1 1l4 4 4-4" stroke="#555" strokeWidth="1.500" /></Svg> : <Svg w={7} h={10}><path d="M1 1l4 4-4 4" stroke="#c4c4c4" strokeWidth="1.500" /></Svg>}
              </span>
              <span className="w-[5px] border-t border-dotted border-[#777] shrink-0" />
              {k === "o" ? FoOpen : Fo}
              <span className="ml-[5px]"><T s={String(t)} /></span>
              {t === "CAD识别" && <span className="ml-[2px] w-[14px] h-[12px] border border-[#3d77c0]" />}
              {t === "CAD识别" && <span className="text-[9px] bg-[#ffe14d] text-[#333] leading-[12px]">NEW</span>}
            </div>
          ) : (
            <div key={String(t)} className="h-[16px] flex items-stretch whitespace-nowrap">
              <span className="ml-[13px] w-[19px] border-l border-dotted border-[#777] shrink-0" />
              <span className={`w-px border-l border-dotted border-[#777] shrink-0 ${last === "l" ? "h-[8px]" : ""}`} />
              <span className="w-[10px] self-center border-t border-dotted border-[#777] shrink-0" />
              <span className={`flex items-center pr-[4px] ${t === "构造柱(Z)" ? "bg-[#d6d6d6]" : ""}`}>
                {TI[ic!]}<span className="ml-[5px]"><T s={String(t)} /></span>
              </span>
              {t === "自定义线(X)" && <span className="ml-[1px] w-[8px] h-[14px] self-center border border-[#3d77c0] bg-[#dce9f7]" />}
            </div>
          ))}
        </div>
        <div className="w-[16px] shrink-0 bg-[#f0f0f0] flex flex-col items-center">
          <span className="h-[22px] flex items-center"><Svg w={9} h={6}><path d="M1 5l3.500-3.500L8 5" stroke="#555" strokeWidth="1.600" /></Svg></span>
          <span className="h-[90px]" />
          <span className="w-full h-[348px] bg-[#c9c9c9]" />
          <span className="flex-1 flex items-center"><Svg w={9} h={6}><path d="M1 1l3.500 3.500L8 1" stroke="#555" strokeWidth="1.600" /></Svg></span>
        </div>
      </div>
      <div className="h-[22px] mt-[2px] border border-[#a8a8a8] bg-gradient-to-b from-[#f7f7f7] to-[#ebebeb] flex items-center justify-center">单构件输入</div>
      <div className="h-[22px] border-x border-b border-[#a8a8a8] bg-gradient-to-b from-[#f7f7f7] to-[#ebebeb] flex items-center justify-center">报表预览</div>
    </div>
  );
}

type PR = { n: string; t: string; v?: N; k: "b" | "k" | "g+" | "g-" | "l"; sel?: boolean; last?: boolean };
const prows: PR[] = [
  { n: "10", t: "箍筋", k: "b", v: <><Rebar /><span className={mono}>8@150</span></> },
  { n: "11", t: "肢数", k: "b", v: <T s="2*2" /> },
  { n: "12", t: "其它箍筋", k: "b" },
  { n: "13", t: "备注", k: "k" },
  { n: "14", t: "其它属性", k: "g-" },
  { n: "15", t: "汇总信息", k: "l", v: "构造柱" },
  { n: "16", t: "保护层厚度(mm)", k: "l", v: <T s="(25)" /> },
  { n: "17", t: "上加密范围(mm)", k: "l" },
  { n: "18", t: "下加密范围(mm)", k: "l" },
  { n: "19", t: "插筋构造", k: "l", v: "纵筋锚固" },
  { n: "20", t: "插筋信息", k: "l" },
  { n: "21", t: "计算设置", k: "l", v: "按默认计算设置计算", sel: true },
  { n: "22", t: "节点设置", k: "l", v: "按默认节点设置计算" },
  { n: "23", t: "搭接设置", k: "l", v: "按默认搭接设置计算" },
  { n: "24", t: "顶标高(m)", k: "l", v: <T s="层底标高+0.4(4.85)" /> },
  { n: "25", t: "底标高(m)", k: "l", v: <T s="层底标高(4.45)" />, last: true },
  { n: "26", t: "锚固搭接", k: "g+" },
  { n: "41", t: "显示样式", k: "g+" },
];
function Popup() {
  const bx = (plus: boolean) => (
    <span className="ml-[4px] mr-[5px] w-[12px] h-[12px] border border-[#9a9a9a] flex items-center justify-center shrink-0">
      <Svg w={8} h={8}><path d={plus ? "M0 4h8M4 0v8" : "M0 4h8"} stroke="#333" /></Svg>
    </span>
  );
  return (
    <div className="absolute left-[946px] top-[58px] w-[280px] h-[494px] bg-white border-t border-t-[#1e88e5] shadow-[0_0_14px_rgba(0,0,0,0.45)] flex flex-col">
      <div className="h-[31px] flex shrink-0">
        <span className="ml-[8px] mt-[7px] leading-[16px]">属性编辑器</span>
        <span className="ml-auto mt-[7px] mr-0 w-[19px] h-[19px] bg-[#c75050] text-white flex items-center justify-center text-[11px] font-bold font-['Liberation_Sans',sans-serif]">x</span>
      </div>
      <div className="h-[364px] flex border-t border-[#c0c0c0] ml-px overflow-hidden shrink-0">
        <div className="w-[260px] shrink-0 overflow-hidden pt-px">
          <div className="flex h-[22px] border-b border-[#c0c0c0]">
            <span className="w-[21px] border-r border-[#c0c0c0] bg-gradient-to-b from-[#ffffff] to-[#ececec]" />
            <span className="w-[121px] border-r border-[#c0c0c0] bg-gradient-to-b from-[#ffffff] to-[#ececec] flex items-center justify-center">属性名称</span>
            <span className="w-[118px] border-r border-[#c0c0c0] bg-gradient-to-b from-[#fadb9f] to-[#f3c15f] text-[#5a007f] flex items-center justify-center">属性值</span>
          </div>
          {prows.map((r) => (
            <div key={r.n} className="flex h-[19px] border-b border-[#c0c0c0] overflow-hidden">
              <span className={`w-[21px] border-r border-[#c0c0c0] flex items-center justify-center ${r.sel ? "bg-[#fdd48c] text-[#5a007f]" : "bg-gradient-to-b from-[#ffffff] to-[#ececec]"}`}><span className={mono}>{r.n}</span></span>
              <span className={`w-[121px] border-r border-[#c0c0c0] flex items-center whitespace-nowrap ${r.sel ? "bg-[#0078d7] text-white" : ""}`}>
                {r.k === "b" && <span className="pl-[20px] mt-[2px] text-[#0000e6]">{r.t}</span>}
                {r.k === "k" && <span className="pl-[20px] mt-[2px]">{r.t}</span>}
                {(r.k === "g+" || r.k === "g-") && <>{bx(r.k === "g+")}<span className="mt-[2px] text-[#8a8a8a]"><T s={r.t} /></span></>}
                {r.k === "l" && <>
                  <span className={`ml-[9px] w-px shrink-0 ${r.sel ? "bg-white h-[19px]" : "bg-[#b0b0b0]"} ${r.last ? "h-[10px] self-start" : "h-[19px]"}`} />
                  <span className={`w-[16px] h-px shrink-0 ${r.sel ? "bg-white" : "bg-[#b0b0b0]"}`} />
                  <span className="ml-[5px] mt-[2px]"><T s={r.t} /></span>
                </>}
              </span>
              <span className={`w-[118px] border-r border-[#c0c0c0] pl-[2px] pt-[2px] flex items-center whitespace-nowrap overflow-hidden ${r.sel ? "bg-[#d8e8f7]" : ""}`}>{r.v}</span>
            </div>
          ))}
        </div>
        <div className="w-[18px] ml-px shrink-0 bg-[#f0f0f0] flex flex-col items-center">
          <span className="h-[22px] flex items-center"><Svg w={9} h={6}><path d="M1 5l3.500-3.500L8 5" stroke="#555" strokeWidth="1.600" /></Svg></span>
          <span className="h-[184px]" />
          <span className="w-[15px] h-[115px] bg-[#c9c9c9]" />
          <span className="flex-1 flex items-center"><Svg w={9} h={6}><path d="M1 1l3.500 3.500L8 1" stroke="#555" strokeWidth="1.600" /></Svg></span>
        </div>
      </div>
      <div className="h-[95px] mt-[3px] ml-px bg-black overflow-hidden shrink-0">
        <svg width="279" height="95" viewBox="0 0 279 95" className="block" fill="none">
          <rect x="101.500" y="10.500" width="68" height="67" stroke="#fff" />
          <rect x="103" y="12" width="65" height="64" stroke="#10f0f0" strokeWidth="2" />
          <circle cx="166" cy="14" r="2" fill="#10f0f0" />
          <path d="M137 5V90M96 44.500H180" stroke="#fff" strokeDasharray="7 3 1 3" />
          <path d="M177 10h5M177 77h5M179.500 10v20M179.500 50v4M179.500 62v15M177 44h5" stroke="#fff" />
          <path d="M102 82v6M137 82v6M170 82v6M102 85h10M127 85h20M160 85h10" stroke="#fff" />
          <text x="114" y="88" fontSize="8" fill="#7d9a9a" fontFamily="Liberation Mono">120</text>
          <text x="148" y="88" fontSize="8" fill="#7d9a9a" fontFamily="Liberation Mono">120</text>
          <text transform="translate(183 37) rotate(-90)" fontSize="8" fill="#9a9a9a" fontFamily="Liberation Mono">120</text>
          <text transform="translate(183 70) rotate(-90)" fontSize="8" fill="#9a9a9a" fontFamily="Liberation Mono">120</text>
        </svg>
      </div>
      <div className="absolute left-[144px] top-[338px] w-[125px] h-[8px] bg-[#f00000]" />
      <div className="absolute left-[145px] top-[361px] w-[103px] h-[6px] bg-[#f00000]" />
    </div>
  );
}
function Sogou() {
  const b = "#1f7ad1";
  return (
    <>
      <div className="absolute left-[1000px] top-[19px] w-[201px] h-[24px] bg-[#f6fbff] border border-[#b5d2ee] flex items-center pl-[27px] text-[#1f7ad1]">
        <span className="w-[21px] font-bold text-[13px] leading-[16px]">英</span>
        <span className="w-[22px] font-bold text-[13px] leading-[16px] pl-[4px]">,'</span>
        <span className="w-[23px]"><Svg><circle cx="8" cy="8" r="7" stroke={b} strokeWidth="1.500" /><circle cx="5.500" cy="6" r="1" fill={b} /><circle cx="10.500" cy="6" r="1" fill={b} /><path d="M4 10c2 3 6 3 8 0" stroke={b} strokeWidth="1.300" /></Svg></span>
        <span className="w-[22px]"><Svg><rect x="5" y="1" width="6" height="10" rx="3" fill={b} /><path d="M3 7c0 6 10 6 10 0M8 12v3M5 15h6" stroke={b} strokeWidth="1.300" /></Svg></span>
        <span className="w-[23px]"><Svg><rect x="0" y="2" width="16" height="12" rx="2" fill={b} /><path d="M2 5h12M2 8h12" stroke="#fff" strokeDasharray="1.500 1" /><path d="M4 11h8" stroke="#fff" /></Svg></span>
        <span className="w-[22px]"><Svg><circle cx="7" cy="4" r="3" fill="#bcc7d6" /><path d="M1 13c0-5 3-6 6-6s4 1 5 2H8v5H1z" fill="#bcc7d6" /><rect x="8" y="10" width="8" height="5" fill="#bcc7d6" /></Svg></span>
        <span className="w-[22px]"><Svg><path d="M5 1h6l5 3-2 3-2-1v9H4V6L2 7 0 4z" fill={b} /></Svg></span>
        <span><Svg><path d="M15 4l-3 3-3-1-1-3 3-3c-3 0-5 2-5 5l-6 6 2 3 2 1 6-6c3 1 5-2 5-5z" fill={b} /></Svg></span>
      </div>
      <div className="absolute left-[996px] top-[18px] w-[25px] h-[24px] rounded-[4px] bg-[#ee4b1f] -rotate-12 flex items-center justify-center text-white font-black text-[20px] leading-[20px] font-['Liberation_Sans',sans-serif]">S</div>
    </>
  );
}
function Status() {
  const c = "h-[20px] border border-[#d4d4d4] bg-gradient-to-b from-[#ffffff] to-[#f4f4f4] flex items-center pl-[1px] shrink-0 whitespace-nowrap";
  return (
    <div className="h-[20px] flex shrink-0">
      <div className={`${c} w-[148px]`}><span className={mono}>X=26889 Y=2262</span></div>
      <div className={`${c} w-[78px] ml-[2px]`}><T s="层高:4.5m" /></div>
      <div className={`${c} w-[98px] ml-[2px]`}><T s="底标高:4.45m" /></div>
      <div className={`${c} w-[48px] ml-[2px]`}><T s="1(1)" /></div>
      <div className={`${c} w-[913px] ml-[2px]`}>在此设置构造柱的计算规则</div>
      <div className={`${c} flex-1 ml-[2px]`}><span className={mono}>317.9 FPS</span></div>
    </div>
  );
}
function Taskbar() {
  const app = "w-[38px] h-[40px] flex items-center justify-center shrink-0";
  const ieE = (s: number) => (
    <Svg w={s} h={s} v="0 0 24 24">
      <path d="M5 13h14c0-5-3-8-7-8s-8 3-8 8 3 8 8 8c3 0 5-1 6-3h-4c-1 1-3 1-4 0-1-1-2-3-2-5zM8 10c1-2 2-3 4-3s3 1 4 3z" fill="#2b9be8" fillRule="evenodd" />
      <path d="M3 20C1 16 8 6 19 2c3-1 4 2 2 5" stroke="#e8b52a" strokeWidth="1.500" />
    </Svg>
  );
  return (
    <div className="h-[40px] bg-[#08191d] flex text-white shrink-0">
      <div className="w-[48px] bg-black flex items-center justify-center shrink-0">
        <Svg w={17} h={17}><path d="M0 2.500l7-1v6.500H0zM8 1.400L17 0v8H8zM0 9h7v6.500l-7-1zM8 9h9v8l-9-1.400z" fill="#fff" /></Svg>
      </div>
      <div className="w-[344px] bg-[#f0f0f0] flex items-center text-[#222] shrink-0">
        <span className="ml-[10px] w-[20px] h-[20px] rounded-full border-[3px] border-black shrink-0 mr-[10px]" />
        <span className="text-[14px] leading-[20px] w-[270px]">在这里输入你要搜索的内容</span>
        <Svg><rect x="5" y="1" width="6" height="10" rx="3" stroke="#333" /><path d="M3 7c0 6 10 6 10 0M8 12v3M5 15h6" stroke="#333" /></Svg>
      </div>
      <div className="w-[46px] flex items-center justify-center shrink-0">
        <Svg><path d="M1 1h10M1 14h14M1 4h10v8H1z" stroke="#fff" /><path d="M14 5h2v2h-2zM14 9h2v2h-2z" fill="#fff" /></Svg>
      </div>
      <div className="w-[54px] flex items-center justify-center shrink-0">
        <Svg w={24} h={24}><path d="M12 11C8 11 3 9 3 5s5-4 7-2 2 6 2 8zM13 12c0-4 2-9 6-9s4 5 2 7-6 2-8 2zM12 13c4 0 9 2 9 6s-5 4-7 2-2-6-2-8zM11 12c0 4-2 9-6 9s-4-5-2-7 6-2 8-2z" fill="#e8e8e8" /></Svg>
      </div>
      <div className="w-[150px] h-[40px] flex shrink-0 items-center">
        <div className="w-[150px] h-[34px] bg-[#3c4548] border border-[#5a6164] flex items-center text-[#c8c8c8] pl-[3px]">
          {ieE(22)}<span className="ml-[2px] w-[97px] leading-[16px]">搜索网页和文件</span>
          <Svg w={18} h={18}><circle cx="8" cy="8" r="6.500" stroke="#c8c8c8" strokeWidth="1.300" /><path d="M12.500 12.500l4 4" stroke="#c8c8c8" strokeWidth="1.300" /></Svg>
        </div>
      </div>
      <div className="w-[42px] ml-[2px] mr-[9px] flex items-center justify-center shrink-0">
        <Svg w={26} h={26}><path d="M12 5a8 8 0 1 0 8 8c0-3-3-5-6-4a3 3 0 0 0 0 6" stroke="#ddd" strokeWidth="1.800" /><path d="M19 1c3 0 3 3 4 6h-8c1-3 1-6 4-6z" fill="#f0a82a" /></Svg>
      </div>
      <div className={app}>{ieE(26)}</div>
      <div className={app}><Svg w={22} h={24}><path d="M1 3h8l2 3h10v16H1z" fill="#f7d774" /><path d="M1 8h20v3H1z" fill="#fbe9ad" /><path d="M7 15h8v8H7z" fill="#3aa6e0" /></Svg></div>
      <div className={`${app} ml-[3px] relative`}>
        <Svg w={24} h={26}><ellipse cx="12" cy="14" rx="10" ry="11" fill="#8fd14f" stroke="#3f9c1f" /><path d="M7 13h10c0-3-2-5-5-5s-5 3-5 6 2 6 5 6c2 0 3-1 4-2" stroke="#fff" strokeWidth="2" /></Svg>
        <span className="absolute bottom-0 left-0 right-0 h-[2px] bg-[#76b9ed]" />
      </div>
      <div className={app}><Svg w={24} h={20}><path d="M0 5l12-5 12 5v15H0z" fill="#fff" /><path d="M0 5l12 8 12-8" stroke="#08191d" strokeWidth="1.600" /></Svg></div>
      <div className={`${app} ml-px`}><Svg w={22} h={24}><path d="M2 13c0-7 5-11 10-11s8 4 8 9v2H8c0 4 6 5 11 2v5c-7 3-17 1-17-7zm6-4h6c0-3-5-3-6 0z" fill="#1272cc" fillRule="evenodd" /></Svg></div>
      <div className="w-[37px] ml-px h-[40px] bg-[#3a4649] flex items-center justify-center shrink-0 relative">
        <span className="w-[24px] h-[24px] rounded-[4px] bg-[#0f8fee] flex items-center justify-center"><Svg w={18} h={18}><path d="M9 2v14M2 7h14" stroke="#fff" strokeWidth="1.600" /><circle cx="5" cy="11" r="2.500" stroke="#fff" strokeWidth="1.300" /></Svg></span>
        <span className="absolute bottom-0 left-0 right-0 h-[2px] bg-[#76b9ed]" />
      </div>
      <div className="w-[17px] ml-[3px] bg-[#f0f0f0] flex flex-col items-center justify-center gap-[16px] shrink-0">
        <Svg w={9} h={6}><path d="M1 5l3.500-3.500L8 5" stroke="#444" strokeWidth="1.500" /></Svg>
        <Svg w={9} h={6}><path d="M1 1l3.500 3.500L8 1" stroke="#444" strokeWidth="1.500" /></Svg>
      </div>
      <div className="w-[58px] flex items-center justify-center shrink-0"><Svg><circle cx="10" cy="4" r="2.500" stroke="#fff" /><circle cx="5" cy="7" r="2.500" stroke="#fff" /><path d="M1 15c0-3 2-5 4-5s4 2 4 5M9 8c3 0 5 2 5 5" stroke="#fff" /></Svg></div>
      <div className="w-[70px] flex flex-col items-center justify-center leading-[18px] shrink-0"><span>25%</span><span>CPU使用</span></div>
      <div className="w-[30px] flex items-center justify-center shrink-0"><Svg w={13} h={8}><path d="M1 7l5.500-6L12 7" stroke="#fff" strokeWidth="1.200" /></Svg></div>
      <div className="w-[22px] flex items-center justify-center shrink-0"><Svg><path d="M2 14C2 8 8 2 14 2M5 14c0-4 5-9 9-9M8 14c0-2 3-6 6-6" stroke="#c8c8c8" strokeDasharray="1.500 1" /><circle cx="12" cy="13" r="1.500" fill="#fff" /></Svg></div>
      <div className="w-[23px] flex items-center justify-center shrink-0"><Svg><path d="M1 6h3l4-4v12l-4-4H1z" stroke="#fff" /><path d="M11 5c1 2 1 4 0 6M13 3c2 3 2 7 0 10" stroke="#fff" /></Svg></div>
      <div className="w-[30px] flex items-center justify-center shrink-0"><Svg w={22} h={15}><rect x=".5" y=".5" width="21" height="14" stroke="#fff" /><path d="M3 4h16M3 7h16" stroke="#fff" strokeDasharray="1 1" /><path d="M6 11h10" stroke="#fff" /></Svg></div>
      <div className="w-[26px] flex items-center justify-center text-[14px] leading-[18px] shrink-0">英</div>
      <div className="w-[32px] flex items-center justify-center shrink-0"><span className="w-[15px] h-[17px] rounded-[2px] -rotate-6 bg-[#ee4b1f] flex items-center justify-center font-black text-[13px] leading-[14px] font-['Liberation_Sans',sans-serif]">S</span></div>
      <div className="w-[76px] flex flex-col items-center justify-center leading-[19px] shrink-0"><span>11:31</span><span>2018/11/5</span></div>
      <div className="w-[38px] flex items-center justify-center shrink-0 relative">
        <Svg w={15} h={16}><path d="M.5.500h14v11H5l-3 3v-3H.5z" fill="#fff" /><path d="M3 3.500h9M3 6h9M3 8.500h6" stroke="#08191d" /></Svg>
        <span className="absolute left-[18px] top-[19px] w-[16px] h-[16px] rounded-full bg-[#555] border border-[#ccc] flex items-center justify-center text-[11px] leading-[12px]">1</span>
      </div>
    </div>
  );
}

export default function App() {
  return (
    <div className="relative w-[1366px] h-[768px] overflow-hidden bg-[#f0f0f0] flex flex-col text-[12px] leading-[16px] text-[#1c1c1c] font-['Noto_Sans_CJK_SC',sans-serif]">
      <TitleBar />
      <MenuBar />
      <Toolbar1 />
      <div className="h-[633px] flex shrink-0 min-h-0">
        <Nav />
        <div className="flex-1 min-w-0 flex flex-col pl-[4px]">
          <div className="h-[5px] shrink-0" />
          <Row2 />
          <Row3 />
          <div className="h-[28px] shrink-0 pl-[491px] pt-[3px]">
            <div className={`${grad} w-[28px] h-[23px] pl-[4px] pt-[4px]`}><Grip c="w-[2px]" /></div>
          </div>
          <Row4 />
          <Canvas />
          <SnapBar />
          <Bottom />
        </div>
      </div>
      <Status />
      <Taskbar />
      <Popup />
      <Sogou />
      <div className="absolute left-[717px] -top-[30px] w-[48px] h-[48px] rounded-full bg-gradient-to-b from-[#58c95d] to-[#33ad47] border-[2px] border-[#d4d4d4] shadow-[0_1px_3px_rgba(0,0,0,0.4)] flex items-end justify-center pb-[2px] text-white text-[13px] font-bold leading-[16px]">80</div>
    </div>
  );
}
